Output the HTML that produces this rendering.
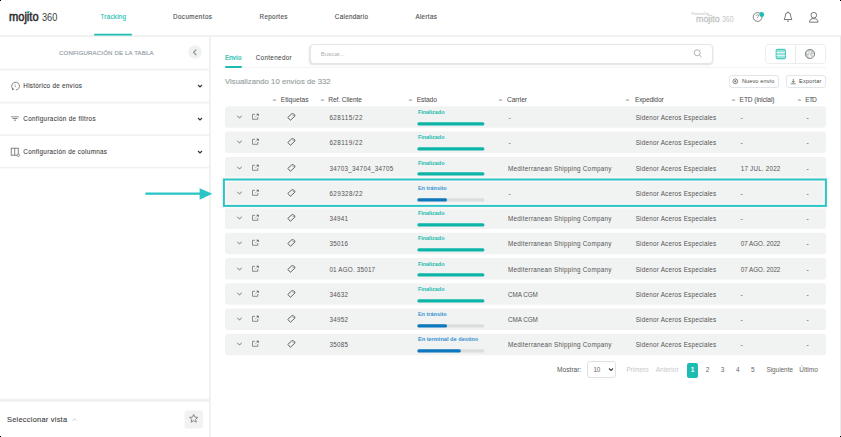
<!DOCTYPE html>
<html><head><meta charset="utf-8"><style>
html,body{margin:0;padding:0;background:#fff;width:841px;height:437px;overflow:hidden;position:relative;font-family:"Liberation Sans", sans-serif;}
.t{position:absolute;white-space:nowrap;line-height:12px;height:12px;}
svg{overflow:visible}
</style></head><body>
<div style="position:absolute;left:0px;top:35px;width:841px;height:2px;background:#f1f2f2"></div>
<div class="t" style="left:8.6px;top:10.50px;font-size:12.9px;color:#2e2e2e;font-weight:normal;transform:scaleX(0.86);transform-origin:0 0;-webkit-text-stroke:0.55px #2e2e2e">mojito</div>
<div class="t" style="left:41.8px;top:11.40px;font-size:11.5px;color:#3a3a3a;font-weight:normal;transform:scaleX(0.8);transform-origin:0 0">360</div>
<svg style="position:absolute;left:25px;top:10px;" width="6" height="4" viewBox="0 0 6 4"><path d="M0.8 2.8 Q2.5 0.3 5 1.2 Q3.5 3.5 0.8 2.8 Z" fill="#1cbcb0"/></svg>
<div class="t" style="left:100.5px;top:10.70px;font-size:6.3px;color:#1cbcb0;font-weight:normal;letter-spacing:0.225px;-webkit-text-stroke:0.12px #1cbcb0">Tracking</div>
<div class="t" style="left:173px;top:10.70px;font-size:6.3px;color:#505050;font-weight:normal;letter-spacing:0.404px;-webkit-text-stroke:0.12px #505050">Documentos</div>
<div class="t" style="left:259.6px;top:10.70px;font-size:6.3px;color:#505050;font-weight:normal;letter-spacing:0.320px;-webkit-text-stroke:0.12px #505050">Reportes</div>
<div class="t" style="left:334.8px;top:10.70px;font-size:6.3px;color:#505050;font-weight:normal;letter-spacing:0.303px;-webkit-text-stroke:0.12px #505050">Calendario</div>
<div class="t" style="left:415.4px;top:10.70px;font-size:6.3px;color:#505050;font-weight:normal;letter-spacing:0.315px;-webkit-text-stroke:0.12px #505050">Alertas</div>
<svg style="position:absolute;left:90px;top:30px;" width="45" height="8" viewBox="0 0 45 8"><rect x="4" y="3.8" width="38" height="1.7" rx="0.85" fill="#1cbcb0"/></svg>
<div class="t" style="left:691.5px;top:7.90px;font-size:3.3px;color:#b5b9b9;font-weight:normal;">Powered by</div>
<div class="t" style="left:695.6px;top:12.60px;font-size:8.7px;color:#c2c6c6;font-weight:normal;transform:scaleX(1.02);transform-origin:0 0;-webkit-text-stroke:0.3px #c2c6c6">mojito</div>
<div class="t" style="left:722.3px;top:12.80px;font-size:9.9px;color:#c5c9c9;font-weight:normal;transform:scaleX(0.7);transform-origin:0 0">360</div>
<svg style="position:absolute;left:751px;top:10px;" width="14" height="13" viewBox="0 0 14 13"><circle cx="6.6" cy="7" r="4.4" fill="none" stroke="#666" stroke-width="0.8"/><path d="M5.3 5.8 Q5.5 4.6 6.6 4.7 Q7.8 4.8 7.6 5.9 Q7.4 6.6 6.6 7.2 L6.6 8" fill="none" stroke="#666" stroke-width="0.6"/><circle cx="6.6" cy="9" r="0.35" fill="#666"/><circle cx="10.7" cy="4.5" r="2.4" fill="#1cbcb0"/></svg>
<svg style="position:absolute;left:782px;top:10px;" width="12" height="13" viewBox="0 0 12 13"><path d="M2.2 9.5 L2.2 9 Q3.2 8 3.2 6.3 Q3.2 2.5 6 2.5 Q8.8 2.5 8.8 6.3 Q8.8 8 9.8 9 L9.8 9.5 Z" fill="none" stroke="#555" stroke-width="0.8" stroke-linejoin="round"/><path d="M5 10.8 Q6 11.8 7 10.8" fill="none" stroke="#555" stroke-width="0.8"/><line x1="6" y1="1.5" x2="6" y2="2.5" stroke="#555" stroke-width="0.8"/></svg>
<svg style="position:absolute;left:807px;top:11px;" width="13" height="13" viewBox="0 0 13 13"><circle cx="6.8" cy="4.2" r="2.8" fill="none" stroke="#555" stroke-width="0.8"/><path d="M2.6 11.2 Q2.6 7.6 6.8 7.6 Q11 7.6 11 11.2 Z" fill="none" stroke="#555" stroke-width="0.8" stroke-linejoin="round"/></svg>
<div style="position:absolute;left:209px;top:37px;width:2px;height:400px;background:#f0f2f2"></div>
<div class="t" style="left:59px;top:47.30px;font-size:6.0px;color:#9aa5ab;font-weight:normal;letter-spacing:0.196px;-webkit-text-stroke:0.2px #9aa5ab">CONFIGURACIÓN DE LA TABLA</div>
<svg style="position:absolute;left:187px;top:44px;" width="16" height="16" viewBox="0 0 16 16"><circle cx="8" cy="8" r="6.7" fill="#f0f1f1"/><path d="M9.3 5.6 L6.5 8.3 L9.3 11" fill="none" stroke="#8a8a8a" stroke-width="1.1"/></svg>
<svg style="position:absolute;left:0px;top:60px;" width="209" height="115" viewBox="0 0 209 115"><rect x="0" y="8.70" width="209" height="1.6" fill="#eff0f0"/><rect x="0" y="41.80" width="209" height="1.6" fill="#eff0f0"/><rect x="0" y="74.30" width="209" height="1.6" fill="#eff0f0"/><rect x="0" y="106.80" width="209" height="1.6" fill="#eff0f0"/></svg>
<div class="t" style="left:23.3px;top:80.30px;font-size:6.3px;color:#404040;font-weight:normal;letter-spacing:0.285px;-webkit-text-stroke:0.08px #404040">Histórico de envíos</div>
<svg style="position:absolute;left:196px;top:83px;" width="8" height="6" viewBox="0 0 8 6"><path d="M2 2 L4 4 L6 2" fill="none" stroke="#333" stroke-width="1.1"/></svg>
<div class="t" style="left:23.3px;top:113.00px;font-size:6.3px;color:#404040;font-weight:normal;letter-spacing:0.342px;-webkit-text-stroke:0.08px #404040">Configuración de filtros</div>
<svg style="position:absolute;left:196px;top:115.7px;" width="8" height="6" viewBox="0 0 8 6"><path d="M2 2 L4 4 L6 2" fill="none" stroke="#333" stroke-width="1.1"/></svg>
<div class="t" style="left:23.3px;top:146.00px;font-size:6.3px;color:#404040;font-weight:normal;letter-spacing:0.306px;-webkit-text-stroke:0.08px #404040">Configuración de columnas</div>
<svg style="position:absolute;left:196px;top:148.7px;" width="8" height="6" viewBox="0 0 8 6"><path d="M2 2 L4 4 L6 2" fill="none" stroke="#333" stroke-width="1.1"/></svg>
<svg style="position:absolute;left:10px;top:81px;" width="10" height="10" viewBox="0 0 10 10"><path d="M3.2 8.2 A3.9 3.9 0 1 1 5.9 9" fill="none" stroke="#666" stroke-width="0.8"/><path d="M5 3.5 L5 5.2 L6.2 6.2" fill="none" stroke="#888" stroke-width="0.7"/><path d="M1.8 7.2 L2.6 9.2 L4.2 8" fill="#555"/></svg>
<svg style="position:absolute;left:10px;top:115px;" width="10" height="7" viewBox="0 0 10 7"><line x1="1" y1="1.8" x2="9" y2="1.8" stroke="#777" stroke-width="0.8"/><line x1="2.5" y1="3.5" x2="7.5" y2="3.5" stroke="#666" stroke-width="0.8"/><line x1="4" y1="5.2" x2="6" y2="5.2" stroke="#666" stroke-width="0.8"/></svg>
<svg style="position:absolute;left:10px;top:146.5px;" width="10" height="10" viewBox="0 0 10 10"><rect x="1.2" y="1.2" width="7" height="7" fill="none" stroke="#666" stroke-width="0.8"/><line x1="4.7" y1="1.2" x2="4.7" y2="8.2" stroke="#666" stroke-width="0.8"/><circle cx="8.3" cy="8.3" r="1.2" fill="#fff" stroke="#666" stroke-width="0.7"/></svg>
<svg style="position:absolute;left:0px;top:396px;" width="209" height="8" viewBox="0 0 209 8"><rect x="0" y="2.6" width="209" height="3.2" fill="#f2f3f3"/><rect x="0" y="3.5" width="209" height="1.4" fill="#eeefef"/></svg>
<div class="t" style="left:7px;top:414.30px;font-size:7.4px;color:#444;font-weight:normal;letter-spacing:0.260px;-webkit-text-stroke:0.12px #444">Seleccionar vista</div>
<svg style="position:absolute;left:71px;top:417px;" width="7" height="5" viewBox="0 0 7 5"><path d="M1.5 3.5 L3.5 1.8 L5.5 3.5" fill="none" stroke="#bbb" stroke-width="0.7"/></svg>
<svg style="position:absolute;left:184px;top:410px;" width="20" height="20" viewBox="0 0 20 20"><rect x="0.5" y="0.4" width="18.5" height="18" rx="2.5" fill="#f1f2f2"/><path d="M9.7 4.4 L10.9 7.1 L13.8 7.4 L11.6 9.3 L12.3 12.2 L9.7 10.7 L7.1 12.2 L7.8 9.3 L5.6 7.4 L8.5 7.1 Z" fill="none" stroke="#777" stroke-width="0.85" stroke-linejoin="round"/></svg>
<div style="position:absolute;left:839.5px;top:36px;width:1px;height:401px;background:#ebebeb"></div>
<div class="t" style="left:224.9px;top:51.50px;font-size:6.3px;color:#1cbcb0;font-weight:normal;letter-spacing:0.123px;-webkit-text-stroke:0.2px #1cbcb0">Envío</div>
<div style="position:absolute;left:225px;top:66px;width:17px;height:2px;background:#1cbcb0;border-radius:1px"></div>
<div class="t" style="left:255.7px;top:51.50px;font-size:6.4px;color:#3a3a3a;font-weight:normal;letter-spacing:0.295px;">Contenedor</div>
<div style="position:absolute;left:242px;top:67px;width:584px;height:1px;background:#f4f4f4"></div>
<div style="position:absolute;left:310px;top:44px;width:401px;height:18px;border:1px solid #e4e6e6;border-radius:4px;background:#fff;box-shadow:-0.5px 1px 2px rgba(0,0,0,0.12)"></div>
<div class="t" style="left:320.8px;top:48.40px;font-size:6.15px;color:#aab0b5;font-weight:normal;">Buscar...</div>
<svg style="position:absolute;left:692px;top:47.5px;" width="12" height="11" viewBox="0 0 12 11"><circle cx="5.2" cy="4.8" r="3" fill="none" stroke="#a0a0a0" stroke-width="0.8"/><line x1="7.4" y1="7" x2="9.6" y2="9.2" stroke="#999" stroke-width="0.8"/></svg>
<div style="position:absolute;left:765px;top:44px;width:58.5px;height:17.5px;border:1px solid #eceeee;border-radius:4px;background:#fff"></div>
<div style="position:absolute;left:795.4px;top:45px;width:0.9px;height:17.5px;background:#eaeaea"></div>
<svg style="position:absolute;left:775px;top:48px;" width="12" height="12" viewBox="0 0 12 12"><rect x="1.2" y="1.3" width="9.2" height="9.5" rx="1" fill="#1cbcb0" opacity="0.45"/><rect x="1.2" y="1.3" width="9.2" height="9.5" rx="1" fill="none" stroke="#1cbcb0" stroke-width="0.9"/><line x1="1.2" y1="4.5" x2="10.4" y2="4.5" stroke="#fff" stroke-width="0.7"/><line x1="1.2" y1="7.6" x2="10.4" y2="7.6" stroke="#fff" stroke-width="0.7"/></svg>
<svg style="position:absolute;left:804px;top:48px;" width="12" height="12" viewBox="0 0 12 12"><circle cx="6" cy="6" r="4.6" fill="#c9cccc"/><circle cx="6" cy="6" r="4.6" fill="none" stroke="#7a7d7d" stroke-width="0.9"/><path d="M2.6 4.6 Q3.6 3.2 4.8 3.9 Q4.4 5.2 3.2 5.4 Z" fill="#fff"/><path d="M6.4 2.4 Q7.2 4 6.2 5.6 Q5.6 7 6.8 7.8 Q7.2 9.2 6.4 10.4 Q5.2 9 4.4 8.6 Q3.6 7.6 4.8 7 Q6 6.2 5.4 4.6 Q5.6 3.2 6.4 2.4 Z" fill="#fff" opacity="0.9"/><circle cx="9" cy="6.6" r="0.9" fill="#fff"/><path d="M7.8 9.6 Q8.8 8.6 9.6 9" fill="none" stroke="#fff" stroke-width="0.6"/></svg>
<div class="t" style="left:225px;top:75.50px;font-size:7.7px;color:#959ca0;font-weight:normal;letter-spacing:0.038px;-webkit-text-stroke:0.12px #959ca0">Visualizando 10 envíos de 332</div>
<div style="position:absolute;left:729px;top:75px;width:47.5px;height:11px;border:1px solid #e3e6e6;border-radius:3px;background:#fff"></div>
<svg style="position:absolute;left:732.3px;top:77.7px;" width="7" height="7" viewBox="0 0 7 7"><circle cx="3.3" cy="3.3" r="2.4" fill="none" stroke="#555" stroke-width="0.7"/><path d="M3.3 2 V4.6 M2 3.3 H4.6" stroke="#555" stroke-width="0.6"/></svg>
<div class="t" style="left:741.9px;top:75.00px;font-size:5.6px;color:#4a4a4a;font-weight:normal;letter-spacing:0.106px;">Nuevo envío</div>
<div style="position:absolute;left:786px;top:75px;width:37.8px;height:11px;border:1px solid #e3e6e6;border-radius:3px;background:#fff"></div>
<svg style="position:absolute;left:789.5px;top:77.5px;" width="7" height="7" viewBox="0 0 7 7"><path d="M3.3 0.8 V4.5 M1.8 3 L3.3 4.5 L4.8 3 M0.8 5.8 H5.8" fill="none" stroke="#555" stroke-width="0.7"/></svg>
<div class="t" style="left:799px;top:75.00px;font-size:5.6px;color:#4a4a4a;font-weight:normal;letter-spacing:0.191px;">Exportar</div>
<svg style="position:absolute;left:272.3px;top:98px;" width="5" height="4" viewBox="0 0 5 4"><path d="M0.3 2.8 L2.5 0.8 L4.7 2.8 Z" fill="#b0b0b0"/></svg>
<div class="t" style="left:280.7px;top:94.20px;font-size:6.6px;color:#505050;font-weight:normal;letter-spacing:0.048px;-webkit-text-stroke:0.05px #505050">Etiquetas</div>
<svg style="position:absolute;left:319.9px;top:98px;" width="5" height="4" viewBox="0 0 5 4"><path d="M0.3 2.8 L2.5 0.8 L4.7 2.8 Z" fill="#b0b0b0"/></svg>
<div class="t" style="left:328.3px;top:94.20px;font-size:6.6px;color:#505050;font-weight:normal;letter-spacing:-0.071px;-webkit-text-stroke:0.05px #505050">Ref. Cliente</div>
<svg style="position:absolute;left:407.8px;top:98px;" width="5" height="4" viewBox="0 0 5 4"><path d="M0.3 2.8 L2.5 0.8 L4.7 2.8 Z" fill="#b0b0b0"/></svg>
<div class="t" style="left:416.7px;top:94.20px;font-size:6.6px;color:#505050;font-weight:normal;letter-spacing:-0.070px;-webkit-text-stroke:0.05px #505050">Estado</div>
<svg style="position:absolute;left:498.0px;top:98px;" width="5" height="4" viewBox="0 0 5 4"><path d="M0.3 2.8 L2.5 0.8 L4.7 2.8 Z" fill="#b0b0b0"/></svg>
<div class="t" style="left:507px;top:94.20px;font-size:6.6px;color:#505050;font-weight:normal;letter-spacing:-0.028px;-webkit-text-stroke:0.05px #505050">Carrier</div>
<svg style="position:absolute;left:625.4px;top:98px;" width="5" height="4" viewBox="0 0 5 4"><path d="M0.3 2.8 L2.5 0.8 L4.7 2.8 Z" fill="#b0b0b0"/></svg>
<div class="t" style="left:634.9px;top:94.20px;font-size:6.6px;color:#505050;font-weight:normal;letter-spacing:-0.115px;-webkit-text-stroke:0.05px #505050">Expedidor</div>
<svg style="position:absolute;left:730.5px;top:98px;" width="5" height="4" viewBox="0 0 5 4"><path d="M0.3 2.8 L2.5 0.8 L4.7 2.8 Z" fill="#b0b0b0"/></svg>
<div class="t" style="left:739.6px;top:94.20px;font-size:6.6px;color:#505050;font-weight:normal;letter-spacing:-0.086px;-webkit-text-stroke:0.05px #505050">ETD (inicial)</div>
<svg style="position:absolute;left:796.8px;top:98px;" width="5" height="4" viewBox="0 0 5 4"><path d="M0.3 2.8 L2.5 0.8 L4.7 2.8 Z" fill="#b0b0b0"/></svg>
<div class="t" style="left:805.3px;top:94.20px;font-size:6.6px;color:#505050;font-weight:normal;letter-spacing:-0.800px;-webkit-text-stroke:0.05px #505050">ETD</div>
<svg style="position:absolute;left:0;top:0" width="841" height="437"><rect x="225" y="106.30" width="601" height="21.5" rx="3" fill="#f1f2f2"/><rect x="225" y="131.57" width="601" height="21.5" rx="3" fill="#f1f2f2"/><rect x="225" y="156.84" width="601" height="21.5" rx="3" fill="#f1f2f2"/><rect x="225" y="182.11" width="601" height="21.5" rx="3" fill="#f1f2f2"/><rect x="225" y="207.38" width="601" height="21.5" rx="3" fill="#f1f2f2"/><rect x="225" y="232.65" width="601" height="21.5" rx="3" fill="#f1f2f2"/><rect x="225" y="257.92" width="601" height="21.5" rx="3" fill="#f1f2f2"/><rect x="225" y="283.19" width="601" height="21.5" rx="3" fill="#f1f2f2"/><rect x="225" y="308.46" width="601" height="21.5" rx="3" fill="#f1f2f2"/><rect x="225" y="333.73" width="601" height="21.5" rx="3" fill="#f1f2f2"/></svg>
<svg style="position:absolute;left:236px;top:112.0px;" width="8" height="8" viewBox="0 0 8 8"><path d="M1.3 3.8 L3.5 6 L5.8 3.8" fill="none" stroke="#6f6f6f" stroke-width="0.95"/></svg>
<svg style="position:absolute;left:251px;top:112.0px;" width="10" height="10" viewBox="0 0 10 10"><path d="M4 2.3 H1.5 V7.3 H6.8 V5" fill="none" stroke="#808080" stroke-width="0.9"/><path d="M3.9 5.4 L6.2 3.1" fill="none" stroke="#999" stroke-width="0.7"/><path d="M5.2 1.7 L7.7 1.7 L7.7 4.2 Z" fill="#505050"/></svg>
<svg style="position:absolute;left:286px;top:112.0px;" width="10" height="10" viewBox="0 0 10 10"><path d="M1.8 5.4 L5.9 1.7 L7.6 1.9 Q9.3 2.6 8.9 4.1 L4.4 8.3 Z" fill="none" stroke="#666" stroke-width="1" stroke-linejoin="round"/><circle cx="7.2" cy="3.5" r="0.5" fill="#777"/></svg>
<div class="t" style="left:329.4px;top:112.00px;font-size:6.3px;color:#555;font-weight:normal;letter-spacing:0.473px;">628115/22</div>
<div class="t" style="left:417.9px;top:106.00px;font-size:5.44px;color:#1cbcb0;font-weight:bold;">Finalizado</div>
<svg style="position:absolute;left:417px;top:121.8px;" width="68" height="4" viewBox="0 0 68 4"><rect x="0.4" y="0.3" width="67" height="3.1" rx="1.5" fill="#0db5a8"/></svg>
<div class="t" style="left:508.5px;top:112.00px;font-size:6.8px;color:#555;font-weight:normal;">-</div>
<div class="t" style="left:635.7px;top:112.00px;font-size:6.3px;color:#555;font-weight:normal;letter-spacing:0.236px;">Sidenor Aceros Especiales</div>
<div class="t" style="left:740.5px;top:112.00px;font-size:6.8px;color:#555;font-weight:normal;">-</div>
<div class="t" style="left:806.5px;top:112.00px;font-size:6.8px;color:#555;font-weight:normal;">-</div>
<svg style="position:absolute;left:236px;top:137.26999999999998px;" width="8" height="8" viewBox="0 0 8 8"><path d="M1.3 3.8 L3.5 6 L5.8 3.8" fill="none" stroke="#6f6f6f" stroke-width="0.95"/></svg>
<svg style="position:absolute;left:251px;top:137.26999999999998px;" width="10" height="10" viewBox="0 0 10 10"><path d="M4 2.3 H1.5 V7.3 H6.8 V5" fill="none" stroke="#808080" stroke-width="0.9"/><path d="M3.9 5.4 L6.2 3.1" fill="none" stroke="#999" stroke-width="0.7"/><path d="M5.2 1.7 L7.7 1.7 L7.7 4.2 Z" fill="#505050"/></svg>
<svg style="position:absolute;left:286px;top:137.26999999999998px;" width="10" height="10" viewBox="0 0 10 10"><path d="M1.8 5.4 L5.9 1.7 L7.6 1.9 Q9.3 2.6 8.9 4.1 L4.4 8.3 Z" fill="none" stroke="#666" stroke-width="1" stroke-linejoin="round"/><circle cx="7.2" cy="3.5" r="0.5" fill="#777"/></svg>
<div class="t" style="left:329.4px;top:137.27px;font-size:6.3px;color:#555;font-weight:normal;letter-spacing:0.473px;">628119/22</div>
<div class="t" style="left:417.9px;top:131.27px;font-size:5.44px;color:#1cbcb0;font-weight:bold;">Finalizado</div>
<svg style="position:absolute;left:417px;top:147.07px;" width="68" height="4" viewBox="0 0 68 4"><rect x="0.4" y="0.3" width="67" height="3.1" rx="1.5" fill="#0db5a8"/></svg>
<div class="t" style="left:508.5px;top:137.27px;font-size:6.8px;color:#555;font-weight:normal;">-</div>
<div class="t" style="left:635.7px;top:137.27px;font-size:6.3px;color:#555;font-weight:normal;letter-spacing:0.236px;">Sidenor Aceros Especiales</div>
<div class="t" style="left:740.5px;top:137.27px;font-size:6.8px;color:#555;font-weight:normal;">-</div>
<div class="t" style="left:806.5px;top:137.27px;font-size:6.8px;color:#555;font-weight:normal;">-</div>
<svg style="position:absolute;left:236px;top:162.54000000000002px;" width="8" height="8" viewBox="0 0 8 8"><path d="M1.3 3.8 L3.5 6 L5.8 3.8" fill="none" stroke="#6f6f6f" stroke-width="0.95"/></svg>
<svg style="position:absolute;left:251px;top:162.54000000000002px;" width="10" height="10" viewBox="0 0 10 10"><path d="M4 2.3 H1.5 V7.3 H6.8 V5" fill="none" stroke="#808080" stroke-width="0.9"/><path d="M3.9 5.4 L6.2 3.1" fill="none" stroke="#999" stroke-width="0.7"/><path d="M5.2 1.7 L7.7 1.7 L7.7 4.2 Z" fill="#505050"/></svg>
<svg style="position:absolute;left:286px;top:162.54000000000002px;" width="10" height="10" viewBox="0 0 10 10"><path d="M1.8 5.4 L5.9 1.7 L7.6 1.9 Q9.3 2.6 8.9 4.1 L4.4 8.3 Z" fill="none" stroke="#666" stroke-width="1" stroke-linejoin="round"/><circle cx="7.2" cy="3.5" r="0.5" fill="#777"/></svg>
<div class="t" style="left:329.4px;top:162.54px;font-size:6.3px;color:#555;font-weight:normal;letter-spacing:0.277px;">34703_34704_34705</div>
<div class="t" style="left:417.9px;top:156.54px;font-size:5.44px;color:#1cbcb0;font-weight:bold;">Finalizado</div>
<svg style="position:absolute;left:417px;top:172.34px;" width="68" height="4" viewBox="0 0 68 4"><rect x="0.4" y="0.3" width="67" height="3.1" rx="1.5" fill="#0db5a8"/></svg>
<div class="t" style="left:508px;top:162.54px;font-size:6.3px;color:#555;font-weight:normal;letter-spacing:0.269px;">Mediterranean Shipping Company</div>
<div class="t" style="left:635.7px;top:162.54px;font-size:6.3px;color:#555;font-weight:normal;letter-spacing:0.236px;">Sidenor Aceros Especiales</div>
<div class="t" style="left:740.7px;top:162.54px;font-size:6.3px;color:#555;font-weight:normal;letter-spacing:0.202px;">17 JUL. 2022</div>
<div class="t" style="left:806.5px;top:162.54px;font-size:6.8px;color:#555;font-weight:normal;">-</div>
<svg style="position:absolute;left:236px;top:187.81px;" width="8" height="8" viewBox="0 0 8 8"><path d="M1.3 3.8 L3.5 6 L5.8 3.8" fill="none" stroke="#6f6f6f" stroke-width="0.95"/></svg>
<svg style="position:absolute;left:251px;top:187.81px;" width="10" height="10" viewBox="0 0 10 10"><path d="M4 2.3 H1.5 V7.3 H6.8 V5" fill="none" stroke="#808080" stroke-width="0.9"/><path d="M3.9 5.4 L6.2 3.1" fill="none" stroke="#999" stroke-width="0.7"/><path d="M5.2 1.7 L7.7 1.7 L7.7 4.2 Z" fill="#505050"/></svg>
<svg style="position:absolute;left:286px;top:187.81px;" width="10" height="10" viewBox="0 0 10 10"><path d="M1.8 5.4 L5.9 1.7 L7.6 1.9 Q9.3 2.6 8.9 4.1 L4.4 8.3 Z" fill="none" stroke="#666" stroke-width="1" stroke-linejoin="round"/><circle cx="7.2" cy="3.5" r="0.5" fill="#777"/></svg>
<div class="t" style="left:329.4px;top:187.81px;font-size:6.3px;color:#555;font-weight:normal;letter-spacing:0.415px;">629328/22</div>
<div class="t" style="left:417.9px;top:181.81px;font-size:5.53px;color:#3593d2;font-weight:bold;">En tránsito</div>
<svg style="position:absolute;left:417px;top:197.61px;" width="68" height="4" viewBox="0 0 68 4"><rect x="0.4" y="0.3" width="67" height="3.1" rx="1.5" fill="#dcdede"/><rect x="0.4" y="0.3" width="29.6" height="3.1" rx="1.5" fill="#0d78bd"/></svg>
<div class="t" style="left:508.5px;top:187.81px;font-size:6.8px;color:#555;font-weight:normal;">-</div>
<div class="t" style="left:635.7px;top:187.81px;font-size:6.3px;color:#555;font-weight:normal;letter-spacing:0.236px;">Sidenor Aceros Especiales</div>
<div class="t" style="left:740.5px;top:187.81px;font-size:6.8px;color:#555;font-weight:normal;">-</div>
<div class="t" style="left:806.5px;top:187.81px;font-size:6.8px;color:#555;font-weight:normal;">-</div>
<svg style="position:absolute;left:236px;top:213.07999999999998px;" width="8" height="8" viewBox="0 0 8 8"><path d="M1.3 3.8 L3.5 6 L5.8 3.8" fill="none" stroke="#6f6f6f" stroke-width="0.95"/></svg>
<svg style="position:absolute;left:251px;top:213.07999999999998px;" width="10" height="10" viewBox="0 0 10 10"><path d="M4 2.3 H1.5 V7.3 H6.8 V5" fill="none" stroke="#808080" stroke-width="0.9"/><path d="M3.9 5.4 L6.2 3.1" fill="none" stroke="#999" stroke-width="0.7"/><path d="M5.2 1.7 L7.7 1.7 L7.7 4.2 Z" fill="#505050"/></svg>
<svg style="position:absolute;left:286px;top:213.07999999999998px;" width="10" height="10" viewBox="0 0 10 10"><path d="M1.8 5.4 L5.9 1.7 L7.6 1.9 Q9.3 2.6 8.9 4.1 L4.4 8.3 Z" fill="none" stroke="#666" stroke-width="1" stroke-linejoin="round"/><circle cx="7.2" cy="3.5" r="0.5" fill="#777"/></svg>
<div class="t" style="left:329.4px;top:213.08px;font-size:6.3px;color:#555;font-weight:normal;letter-spacing:0.245px;">34941</div>
<div class="t" style="left:417.9px;top:207.08px;font-size:5.44px;color:#1cbcb0;font-weight:bold;">Finalizado</div>
<svg style="position:absolute;left:417px;top:222.88px;" width="68" height="4" viewBox="0 0 68 4"><rect x="0.4" y="0.3" width="67" height="3.1" rx="1.5" fill="#0db5a8"/></svg>
<div class="t" style="left:508px;top:213.08px;font-size:6.3px;color:#555;font-weight:normal;letter-spacing:0.269px;">Mediterranean Shipping Company</div>
<div class="t" style="left:635.7px;top:213.08px;font-size:6.3px;color:#555;font-weight:normal;letter-spacing:0.236px;">Sidenor Aceros Especiales</div>
<div class="t" style="left:740.5px;top:213.08px;font-size:6.8px;color:#555;font-weight:normal;">-</div>
<div class="t" style="left:806.5px;top:213.08px;font-size:6.8px;color:#555;font-weight:normal;">-</div>
<svg style="position:absolute;left:236px;top:238.34999999999997px;" width="8" height="8" viewBox="0 0 8 8"><path d="M1.3 3.8 L3.5 6 L5.8 3.8" fill="none" stroke="#6f6f6f" stroke-width="0.95"/></svg>
<svg style="position:absolute;left:251px;top:238.34999999999997px;" width="10" height="10" viewBox="0 0 10 10"><path d="M4 2.3 H1.5 V7.3 H6.8 V5" fill="none" stroke="#808080" stroke-width="0.9"/><path d="M3.9 5.4 L6.2 3.1" fill="none" stroke="#999" stroke-width="0.7"/><path d="M5.2 1.7 L7.7 1.7 L7.7 4.2 Z" fill="#505050"/></svg>
<svg style="position:absolute;left:286px;top:238.34999999999997px;" width="10" height="10" viewBox="0 0 10 10"><path d="M1.8 5.4 L5.9 1.7 L7.6 1.9 Q9.3 2.6 8.9 4.1 L4.4 8.3 Z" fill="none" stroke="#666" stroke-width="1" stroke-linejoin="round"/><circle cx="7.2" cy="3.5" r="0.5" fill="#777"/></svg>
<div class="t" style="left:329.4px;top:238.35px;font-size:6.3px;color:#555;font-weight:normal;letter-spacing:0.245px;">35016</div>
<div class="t" style="left:417.9px;top:232.35px;font-size:5.44px;color:#1cbcb0;font-weight:bold;">Finalizado</div>
<svg style="position:absolute;left:417px;top:248.14999999999998px;" width="68" height="4" viewBox="0 0 68 4"><rect x="0.4" y="0.3" width="67" height="3.1" rx="1.5" fill="#0db5a8"/></svg>
<div class="t" style="left:508px;top:238.35px;font-size:6.3px;color:#555;font-weight:normal;letter-spacing:0.269px;">Mediterranean Shipping Company</div>
<div class="t" style="left:635.7px;top:238.35px;font-size:6.3px;color:#555;font-weight:normal;letter-spacing:0.236px;">Sidenor Aceros Especiales</div>
<div class="t" style="left:740.7px;top:238.35px;font-size:6.3px;color:#555;font-weight:normal;letter-spacing:-0.021px;">07 AGO. 2022</div>
<div class="t" style="left:806.5px;top:238.35px;font-size:6.8px;color:#555;font-weight:normal;">-</div>
<svg style="position:absolute;left:236px;top:263.62px;" width="8" height="8" viewBox="0 0 8 8"><path d="M1.3 3.8 L3.5 6 L5.8 3.8" fill="none" stroke="#6f6f6f" stroke-width="0.95"/></svg>
<svg style="position:absolute;left:251px;top:263.62px;" width="10" height="10" viewBox="0 0 10 10"><path d="M4 2.3 H1.5 V7.3 H6.8 V5" fill="none" stroke="#808080" stroke-width="0.9"/><path d="M3.9 5.4 L6.2 3.1" fill="none" stroke="#999" stroke-width="0.7"/><path d="M5.2 1.7 L7.7 1.7 L7.7 4.2 Z" fill="#505050"/></svg>
<svg style="position:absolute;left:286px;top:263.62px;" width="10" height="10" viewBox="0 0 10 10"><path d="M1.8 5.4 L5.9 1.7 L7.6 1.9 Q9.3 2.6 8.9 4.1 L4.4 8.3 Z" fill="none" stroke="#666" stroke-width="1" stroke-linejoin="round"/><circle cx="7.2" cy="3.5" r="0.5" fill="#777"/></svg>
<div class="t" style="left:329.4px;top:263.62px;font-size:6.3px;color:#555;font-weight:normal;letter-spacing:0.189px;">01 AGO. 35017</div>
<div class="t" style="left:417.9px;top:257.62px;font-size:5.44px;color:#1cbcb0;font-weight:bold;">Finalizado</div>
<svg style="position:absolute;left:417px;top:273.42px;" width="68" height="4" viewBox="0 0 68 4"><rect x="0.4" y="0.3" width="67" height="3.1" rx="1.5" fill="#0db5a8"/></svg>
<div class="t" style="left:508px;top:263.62px;font-size:6.3px;color:#555;font-weight:normal;letter-spacing:0.269px;">Mediterranean Shipping Company</div>
<div class="t" style="left:635.7px;top:263.62px;font-size:6.3px;color:#555;font-weight:normal;letter-spacing:0.236px;">Sidenor Aceros Especiales</div>
<div class="t" style="left:740.7px;top:263.62px;font-size:6.3px;color:#555;font-weight:normal;letter-spacing:-0.021px;">07 AGO. 2022</div>
<div class="t" style="left:806.5px;top:263.62px;font-size:6.8px;color:#555;font-weight:normal;">-</div>
<svg style="position:absolute;left:236px;top:288.89px;" width="8" height="8" viewBox="0 0 8 8"><path d="M1.3 3.8 L3.5 6 L5.8 3.8" fill="none" stroke="#6f6f6f" stroke-width="0.95"/></svg>
<svg style="position:absolute;left:251px;top:288.89px;" width="10" height="10" viewBox="0 0 10 10"><path d="M4 2.3 H1.5 V7.3 H6.8 V5" fill="none" stroke="#808080" stroke-width="0.9"/><path d="M3.9 5.4 L6.2 3.1" fill="none" stroke="#999" stroke-width="0.7"/><path d="M5.2 1.7 L7.7 1.7 L7.7 4.2 Z" fill="#505050"/></svg>
<svg style="position:absolute;left:286px;top:288.89px;" width="10" height="10" viewBox="0 0 10 10"><path d="M1.8 5.4 L5.9 1.7 L7.6 1.9 Q9.3 2.6 8.9 4.1 L4.4 8.3 Z" fill="none" stroke="#666" stroke-width="1" stroke-linejoin="round"/><circle cx="7.2" cy="3.5" r="0.5" fill="#777"/></svg>
<div class="t" style="left:329.4px;top:288.89px;font-size:6.3px;color:#555;font-weight:normal;letter-spacing:0.245px;">34632</div>
<div class="t" style="left:417.9px;top:282.89px;font-size:5.44px;color:#1cbcb0;font-weight:bold;">Finalizado</div>
<svg style="position:absolute;left:417px;top:298.69px;" width="68" height="4" viewBox="0 0 68 4"><rect x="0.4" y="0.3" width="67" height="3.1" rx="1.5" fill="#0db5a8"/></svg>
<div class="t" style="left:508px;top:288.89px;font-size:6.3px;color:#555;font-weight:normal;letter-spacing:-0.050px;">CMA CGM</div>
<div class="t" style="left:635.7px;top:288.89px;font-size:6.3px;color:#555;font-weight:normal;letter-spacing:0.236px;">Sidenor Aceros Especiales</div>
<div class="t" style="left:740.5px;top:288.89px;font-size:6.8px;color:#555;font-weight:normal;">-</div>
<div class="t" style="left:806.5px;top:288.89px;font-size:6.8px;color:#555;font-weight:normal;">-</div>
<svg style="position:absolute;left:236px;top:314.15999999999997px;" width="8" height="8" viewBox="0 0 8 8"><path d="M1.3 3.8 L3.5 6 L5.8 3.8" fill="none" stroke="#6f6f6f" stroke-width="0.95"/></svg>
<svg style="position:absolute;left:251px;top:314.15999999999997px;" width="10" height="10" viewBox="0 0 10 10"><path d="M4 2.3 H1.5 V7.3 H6.8 V5" fill="none" stroke="#808080" stroke-width="0.9"/><path d="M3.9 5.4 L6.2 3.1" fill="none" stroke="#999" stroke-width="0.7"/><path d="M5.2 1.7 L7.7 1.7 L7.7 4.2 Z" fill="#505050"/></svg>
<svg style="position:absolute;left:286px;top:314.15999999999997px;" width="10" height="10" viewBox="0 0 10 10"><path d="M1.8 5.4 L5.9 1.7 L7.6 1.9 Q9.3 2.6 8.9 4.1 L4.4 8.3 Z" fill="none" stroke="#666" stroke-width="1" stroke-linejoin="round"/><circle cx="7.2" cy="3.5" r="0.5" fill="#777"/></svg>
<div class="t" style="left:329.4px;top:314.16px;font-size:6.3px;color:#555;font-weight:normal;letter-spacing:0.245px;">34952</div>
<div class="t" style="left:417.9px;top:308.16px;font-size:5.53px;color:#3593d2;font-weight:bold;">En tránsito</div>
<svg style="position:absolute;left:417px;top:323.96px;" width="68" height="4" viewBox="0 0 68 4"><rect x="0.4" y="0.3" width="67" height="3.1" rx="1.5" fill="#dcdede"/><rect x="0.4" y="0.3" width="29.6" height="3.1" rx="1.5" fill="#0d78bd"/></svg>
<div class="t" style="left:508px;top:314.16px;font-size:6.3px;color:#555;font-weight:normal;letter-spacing:-0.050px;">CMA CGM</div>
<div class="t" style="left:635.7px;top:314.16px;font-size:6.3px;color:#555;font-weight:normal;letter-spacing:0.236px;">Sidenor Aceros Especiales</div>
<div class="t" style="left:740.5px;top:314.16px;font-size:6.8px;color:#555;font-weight:normal;">-</div>
<div class="t" style="left:806.5px;top:314.16px;font-size:6.8px;color:#555;font-weight:normal;">-</div>
<svg style="position:absolute;left:236px;top:339.43px;" width="8" height="8" viewBox="0 0 8 8"><path d="M1.3 3.8 L3.5 6 L5.8 3.8" fill="none" stroke="#6f6f6f" stroke-width="0.95"/></svg>
<svg style="position:absolute;left:251px;top:339.43px;" width="10" height="10" viewBox="0 0 10 10"><path d="M4 2.3 H1.5 V7.3 H6.8 V5" fill="none" stroke="#808080" stroke-width="0.9"/><path d="M3.9 5.4 L6.2 3.1" fill="none" stroke="#999" stroke-width="0.7"/><path d="M5.2 1.7 L7.7 1.7 L7.7 4.2 Z" fill="#505050"/></svg>
<svg style="position:absolute;left:286px;top:339.43px;" width="10" height="10" viewBox="0 0 10 10"><path d="M1.8 5.4 L5.9 1.7 L7.6 1.9 Q9.3 2.6 8.9 4.1 L4.4 8.3 Z" fill="none" stroke="#666" stroke-width="1" stroke-linejoin="round"/><circle cx="7.2" cy="3.5" r="0.5" fill="#777"/></svg>
<div class="t" style="left:329.4px;top:339.43px;font-size:6.3px;color:#555;font-weight:normal;letter-spacing:0.245px;">35085</div>
<div class="t" style="left:417.9px;top:333.43px;font-size:5.63px;color:#3593d2;font-weight:bold;">En terminal de destino</div>
<svg style="position:absolute;left:417px;top:349.23px;" width="68" height="4" viewBox="0 0 68 4"><rect x="0.4" y="0.3" width="67" height="3.1" rx="1.5" fill="#dcdede"/><rect x="0.4" y="0.3" width="43.4" height="3.1" rx="1.5" fill="#0d78bd"/></svg>
<div class="t" style="left:508px;top:339.43px;font-size:6.3px;color:#555;font-weight:normal;letter-spacing:0.269px;">Mediterranean Shipping Company</div>
<div class="t" style="left:635.7px;top:339.43px;font-size:6.3px;color:#555;font-weight:normal;letter-spacing:0.236px;">Sidenor Aceros Especiales</div>
<div class="t" style="left:740.5px;top:339.43px;font-size:6.8px;color:#555;font-weight:normal;">-</div>
<div class="t" style="left:806.5px;top:339.43px;font-size:6.8px;color:#555;font-weight:normal;">-</div>
<svg style="position:absolute;left:215px;top:170px;" width="620" height="45" viewBox="0 0 620 45"><rect x="8.9" y="9.5" width="602" height="26.4" fill="none" stroke="#faf7f7" stroke-width="5.6"/><rect x="8.9" y="9.5" width="602" height="26.4" fill="none" stroke="#2cc5c6" stroke-width="2"/></svg>
<svg style="position:absolute;left:140px;top:185px;" width="75" height="18" viewBox="0 0 75 18"><rect x="5.4" y="7.5" width="56" height="2.3" fill="#2cc5c6"/><path d="M59.6 3.3 L72.3 8.7 L59.6 14.7 Z" fill="#2cc5c6"/></svg>
<div class="t" style="left:557.1px;top:363.50px;font-size:6.6px;color:#555;font-weight:normal;">Mostrar:</div>
<div style="position:absolute;left:587px;top:361px;width:26.7px;height:14.5px;border:1px solid #dfe2e2;border-radius:3px;background:#fff"></div>
<div class="t" style="left:593.6px;top:363.50px;font-size:6.3px;color:#666;font-weight:normal;letter-spacing:-0.4px">10</div>
<svg style="position:absolute;left:607px;top:366px;" width="8" height="6" viewBox="0 0 8 6"><path d="M2 2.5 L4 4.5 L6 2.5" fill="none" stroke="#444" stroke-width="1.1"/></svg>
<div class="t" style="left:626.4px;top:363.50px;font-size:6.35px;color:#c6c9c9;font-weight:normal;">Primero</div>
<div class="t" style="left:655.7px;top:363.50px;font-size:6.54px;color:#c6c9c9;font-weight:normal;">Anterior</div>
<div style="position:absolute;left:687px;top:362.7px;width:11.1px;height:15.1px;background:#1cbcb0;border-radius:2px"></div>
<div class="t" style="left:690.7px;top:363.80px;font-size:6.5px;color:#fff;font-weight:bold;">1</div>
<div class="t" style="left:705.7px;top:363.50px;font-size:6.5px;color:#666;font-weight:normal;">2</div>
<div class="t" style="left:720.7px;top:363.50px;font-size:6.5px;color:#666;font-weight:normal;">3</div>
<div class="t" style="left:735.9px;top:363.50px;font-size:6.5px;color:#666;font-weight:normal;">4</div>
<div class="t" style="left:751px;top:363.50px;font-size:6.5px;color:#666;font-weight:normal;">5</div>
<div class="t" style="left:766.4px;top:363.50px;font-size:6.38px;color:#666;font-weight:normal;">Siguiente</div>
<div class="t" style="left:799.3px;top:363.50px;font-size:6.6px;color:#666;font-weight:normal;">Último</div>
<div style="position:absolute;left:0px;top:0px;width:1px;height:1px;background:#000"></div>
<div style="position:absolute;left:840px;top:0px;width:1px;height:1px;background:#000"></div>
<div style="position:absolute;left:0px;top:436px;width:1px;height:1px;background:#000"></div>
<div style="position:absolute;left:840px;top:436px;width:1px;height:1px;background:#000"></div>
</body></html>
